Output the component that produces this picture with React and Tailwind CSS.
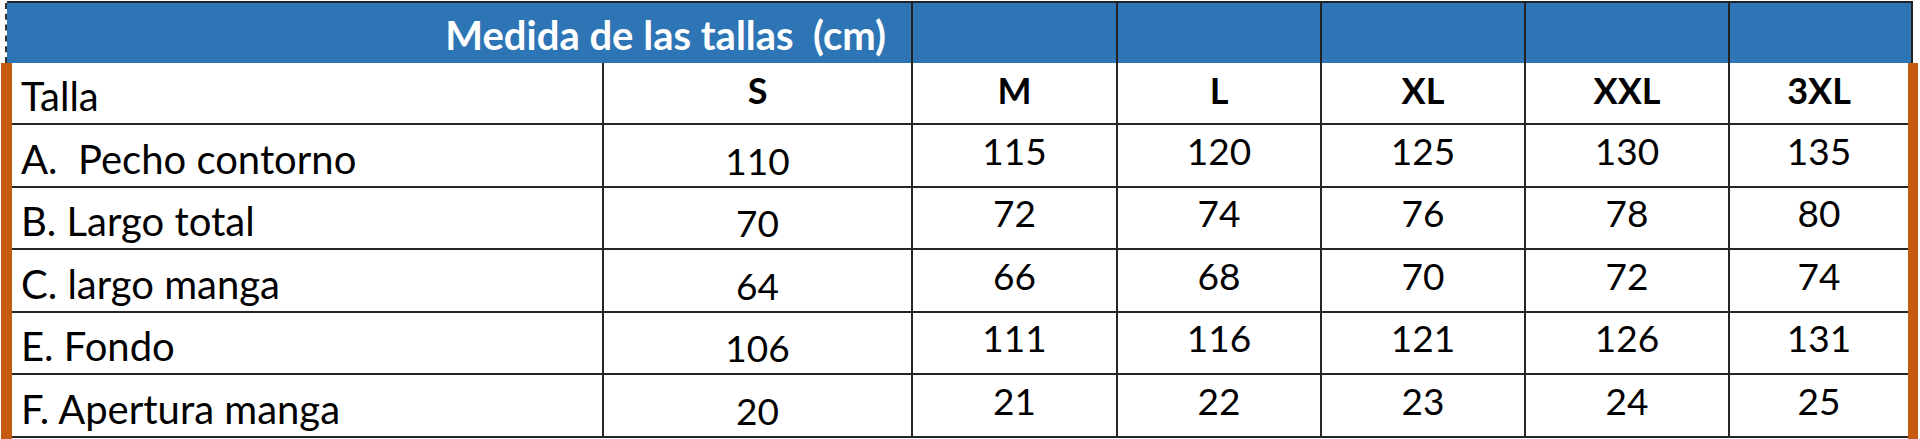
import React from "react";

const rows = [
  { label: "A.  Pecho contorno", v: ["110", "115", "120", "125", "130", "135"] },
  { label: "B. Largo total", v: ["70", "72", "74", "76", "78", "80"] },
  { label: "C. largo manga", v: ["64", "66", "68", "70", "72", "74"] },
  { label: "E. Fondo", v: ["106", "111", "116", "121", "126", "131"] },
  { label: "F. Apertura manga", v: ["20", "21", "22", "23", "24", "25"] },
];

const sizes = ["S", "M", "L", "XL", "XXL", "3XL"];
const colW = ["w-[309px]", "w-[205px]", "w-[204px]", "w-[204px]", "w-[204px]", "w-[178px]"];

export default function App() {
  return (
    <div
      className="w-[1920px] h-[439px] bg-white overflow-hidden text-black"
      style={{ fontFamily: "Lato, 'Open Sans', sans-serif" }}
    >
      {/* header */}
      <div className="flex h-[63px] pl-[5px]">
        <div className="w-[2px] border-l-2 border-dashed border-[#333] mt-[3px]" />
        <div className="flex flex-1 max-w-[1906px] bg-[#2e75b6] border-t-[2px] border-[#222] border-r-2 mt-[1px]">
          <div className="w-[904px] flex items-end justify-end pr-[25px] pb-[8px]">
            <span className="text-white font-bold text-[40px] leading-none whitespace-pre">
              Medida de las tallas  (cm)
            </span>
          </div>
          <div className="w-[205px] border-l-2 border-[#222]" />
          <div className="w-[204px] border-l-2 border-[#222]" />
          <div className="w-[204px] border-l-2 border-[#222]" />
          <div className="w-[204px] border-l-2 border-[#222]" />
          <div className="flex-1 border-l-2 border-[#222]" />
        </div>
      </div>

      {/* body */}
      <div className="flex h-[376px]">
        <div className="ml-[1px] w-[11px] bg-[#c55a11]" />
        <div className="w-[1896px] flex flex-col">
          {/* size row */}
          <div className="flex h-[62px] border-b-2 border-[#262626]">
            <div className="w-[592px] border-r-2 border-[#262626] flex items-end pl-[9px] pb-[7px]">
              <span className="text-[40px] leading-none">Talla</span>
            </div>
            {sizes.map((s, i) => (
              <div
                key={s}
                className={`${colW[i]} ${i < 5 ? "border-r-2 border-[#262626]" : ""} flex items-end justify-center pb-[15px]`}
              >
                <span className="text-[36px] font-bold leading-none">{s}</span>
              </div>
            ))}
          </div>
          {rows.map((r, ri) => (
            <div
              key={r.label}
              className={`flex ${ri % 2 === 0 ? "h-[63px]" : "h-[62px]"} border-b-2 border-[#262626]`}
            >
              <div className="w-[592px] border-r-2 border-[#262626] flex items-end pl-[9px] pb-[7px]">
                <span className="text-[40px] leading-none whitespace-pre">{r.label}</span>
              </div>
              {r.v.map((v, i) => (
                <div
                  key={i}
                  className={`${colW[i]} ${i < 5 ? "border-r-2 border-[#262626]" : ""} flex items-end justify-center ${i === 0 ? "pb-[7px]" : "pb-[17px]"}`}
                >
                  <span className="text-[37px] leading-none">{v}</span>
                </div>
              ))}
            </div>
          ))}
        </div>
        <div className="w-[10px] bg-[#c55a11]" />
      </div>
    </div>
  );
}
